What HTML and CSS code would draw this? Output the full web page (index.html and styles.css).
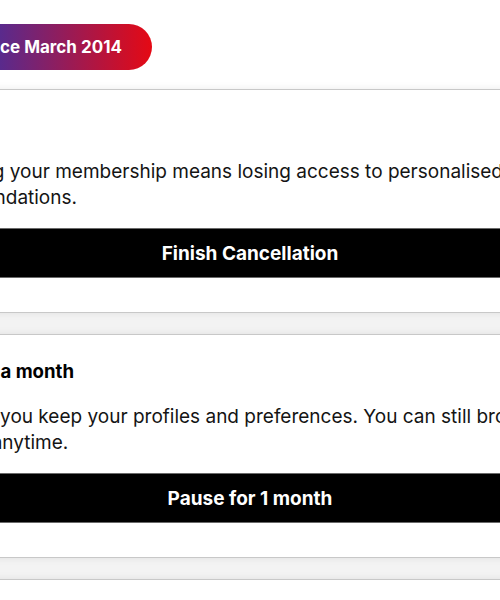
FILE: index.html
```html
<!DOCTYPE html>
<html lang="en">
<head>
<meta charset="utf-8">
<title>Cancel membership</title>
<link rel="stylesheet" href="styles.css">
</head>
<body>
<div class="page">
  <div class="badge">Member since March 2014</div>
  <div class="cards">
    <section class="card">
      <h2 class="card-title">Cancel</h2>
      <p class="card-text">Cancelling your membership means losing access to personalised recommendations.</p>
      <button class="card-btn">Finish Cancellation</button>
    </section>
    <section class="card">
      <h2 class="card-title">Pause for a month</h2>
      <p class="card-text">This way, you keep your profiles and preferences. You can still browse and rejoin us anytime.</p>
      <button class="card-btn">Pause for 1 month</button>
    </section>
    <section class="card">
      <h2 class="card-title">Change plan</h2>
      <p class="card-text">Switch to a plan that suits you better.</p>
    </section>
  </div>
</div>
</body>
</html>
```
FILE: styles.css
```css
html, body {
  margin: 0;
  padding: 0;
  background: #ffffff;
  overflow: hidden;
}
body {
  font-family: Inter, "Noto Sans", "Liberation Sans", sans-serif;
  color: #141414;
}
.page {
  width: 680px;
  margin-left: -90px;
  padding-top: 24px;
}
.badge {
  display: inline-flex;
  align-items: center;
  height: 46px;
  margin-left: -38px;
  padding: 0 30px;
  border-radius: 23px;
  background: linear-gradient(to right, #3a2fb0 0%, #5a2a8c 46%, #e50914 100%);
  color: #ffffff;
  font-size: 17px;
  font-weight: 700;
}
.cards {
  display: flex;
  flex-direction: column;
  gap: 21px;
  margin: 19px -40px 0;
  background: #f3f3f3;
}
.card {
  background: #ffffff;
  border-top: 1px solid #c8c8c8;
  border-bottom: 1px solid #c8c8c8;
  box-shadow: 0 0 8px rgba(0, 0, 0, 0.08);
  padding: 24px 40px 34px;
}
.card-title {
  margin: 0;
  font-size: 18.6px;
  line-height: 24px;
  font-weight: 700;
  color: #000000;
}
.card-text {
  margin: 21px 0 0;
  font-size: 19px;
  line-height: 26px;
  font-weight: 400;
  color: #141414;
}
.card-btn {
  display: block;
  width: 100%;
  height: 50px;
  margin-top: 17px;
  border: 1px solid #6a6a6a;
  border-left: none;
  border-right: none;
  background: #000000;
  color: #ffffff;
  font-family: inherit;
  font-size: 19px;
  font-weight: 700;
  cursor: pointer;
}
```
